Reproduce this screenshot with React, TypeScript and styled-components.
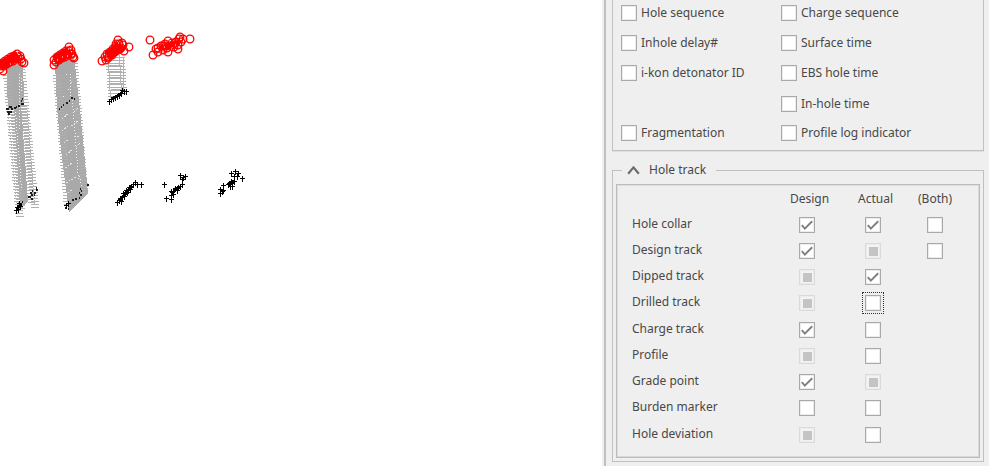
import React, { useEffect, useId, useRef, useState } from "react";
import styled, { createGlobalStyle } from "styled-components";

const GlobalStyle = createGlobalStyle`
  *, *::before, *::after { box-sizing: border-box; }
  html, body, #root { height: 100%; }
  body {
    margin: 0;
    overflow: hidden;
    background: #ffffff;
    color: #484848;
    font-family: "Noto Sans", "Open Sans", sans-serif;
    font-size: 12px;
    line-height: 16px;
  }
`;

const Window = styled.div`
  display: flex;
  min-height: 100%;
`;

const Viewport = styled.main`
  flex: 1;
  min-width: 0;
  background: #ffffff;
`;

const Plot = styled.svg`
  display: block;
  overflow: hidden;
`;

const Sidebar = styled.aside`
  flex: 0 0 387px;
  display: flex;
  background: #efefef;
  padding-left: 2px;
`;

const SidebarBody = styled.div`
  flex: 1;
  border-left: 2px solid #c0c0c0;
  padding: 0 5px 0 6px;
`;

const LabelGroup = styled.section`
  display: grid;
  grid-template-columns: 160px 1fr;
  grid-template-rows: 30px 30px 30px 32px 26px;
  align-items: center;
  margin-top: -2px;
  padding: 0 8px 4px;
  border: 1px solid #c0c0c0;
  border-top: 0;
  box-shadow: 0 1px 0 #dedede;
`;

const Option = styled.label<{ $column: number; $row: number }>`
  grid-column: ${(p) => p.$column};
  grid-row: ${(p) => p.$row};
  display: flex;
  align-items: center;
  gap: 4px;
  white-space: nowrap;
`;

const Box = styled.span`
  position: relative;
  display: inline-flex;
  flex: none;
  width: 16px;
  height: 16px;
`;

const BoxInput = styled.input<{ $focusFrame?: boolean }>`
  appearance: none;
  width: 16px;
  height: 16px;
  margin: 0;
  border: 1px solid #a9a9a9;
  background: #ffffff;
  box-shadow: inset 0 0 0 1px #ececec;
  outline: ${(p) => (p.$focusFrame ? "1px dotted #303030" : "none")};
  outline-offset: 2px;

  &:disabled {
    border-color: #dadada;
    background: #f3f3f3;
  }
`;

const BoxMark = styled.svg`
  position: absolute;
  inset: 0;
  pointer-events: none;
`;

const TrackGroup = styled.fieldset`
  min-width: 0;
  margin: 11px 0 0;
  padding: 6px 3px 3px;
  border: 1px solid #c0c0c0;
`;

const TrackLegend = styled.legend`
  margin-left: 6px;
  padding: 0 10px 0 5px;
`;

const Toggle = styled.button`
  display: flex;
  align-items: center;
  gap: 9px;
  padding: 0;
  border: 0;
  background: none;
  color: inherit;
  font: inherit;
`;

const TrackFrame = styled.div`
  border: 1px solid #bcbcbc;
  box-shadow: inset -1px -1px 0 #d8d8d8, inset 1px 1px 0 #dedede;
  padding-bottom: 9px;
`;

const TrackTable = styled.table`
  width: 100%;
  table-layout: fixed;
  border-collapse: collapse;
`;

const LabelColumn = styled.col``;

const BoxColumn = styled.col<{ $width: number }>`
  width: ${(p) => p.$width}px;
`;

const ColumnHead = styled.th<{ $indent?: boolean }>`
  height: 27px;
  padding: 0 0 0 ${(p) => (p.$indent ? 6 : 0)}px;
  font-weight: 400;
  text-align: center;
`;

const RowHead = styled.th`
  padding: 0 0 2px 15px;
  font-weight: 400;
  text-align: left;
  white-space: nowrap;
`;

const TrackRow = styled.tr<{ $tall?: boolean }>`
  height: ${(p) => (p.$tall ? 27 : 26)}px;
`;

const BoxCell = styled.td`
  padding: 0;
  text-align: center;
  line-height: 0;
`;

type BoxState = "on" | "off" | "mixed";

interface CheckProps {
  id?: string;
  label?: string;
  initial?: BoxState;
  focusFrame?: boolean;
}

function Check({ id, label, initial = "off", focusFrame }: CheckProps) {
  const [checked, setChecked] = useState(initial === "on");
  const ref = useRef<HTMLInputElement>(null);
  const mixed = initial === "mixed";

  useEffect(() => {
    if (ref.current) ref.current.indeterminate = mixed;
  }, [mixed]);

  return (
    <Box>
      <BoxInput
        ref={ref}
        id={id}
        type="checkbox"
        aria-label={label}
        checked={checked}
        disabled={mixed}
        $focusFrame={focusFrame}
        onChange={(e) => setChecked(e.target.checked)}
      />
      {(checked || mixed) && (
        <BoxMark width="16" height="16" viewBox="0 0 16 16" aria-hidden="true">
          {mixed ? (
            <rect x="4" y="4" width="9" height="9" fill="#c4c4c4" />
          ) : (
            <path d="M2.8 8.2 5.8 11.6 13.2 4.2" fill="none" stroke="#808080" strokeWidth="2" />
          )}
        </BoxMark>
      )}
    </Box>
  );
}

const options: { text: string; column: number; row: number }[] = [
  { text: "Hole sequence", column: 1, row: 1 },
  { text: "Inhole delay#", column: 1, row: 2 },
  { text: "i-kon detonator ID", column: 1, row: 3 },
  { text: "Fragmentation", column: 1, row: 5 },
  { text: "Charge sequence", column: 2, row: 1 },
  { text: "Surface time", column: 2, row: 2 },
  { text: "EBS hole time", column: 2, row: 3 },
  { text: "In-hole time", column: 2, row: 4 },
  { text: "Profile log indicator", column: 2, row: 5 },
];

const tracks: { name: string; design: BoxState; actual: BoxState; both?: BoxState; focus?: boolean; tall?: boolean }[] = [
  { name: "Hole collar", design: "on", actual: "on", both: "off" },
  { name: "Design track", design: "on", actual: "mixed", both: "off" },
  { name: "Dipped track", design: "mixed", actual: "on" },
  { name: "Drilled track", design: "mixed", actual: "off", focus: true },
  { name: "Charge track", design: "on", actual: "off", tall: true },
  { name: "Profile", design: "mixed", actual: "off" },
  { name: "Grade point", design: "on", actual: "mixed" },
  { name: "Burden marker", design: "off", actual: "off" },
  { name: "Hole deviation", design: "mixed", actual: "off", tall: true },
];

type Point = [number, number];

/* Horizontal depth ticks along a hole that leans from (x, top) at the given slope. */
const ticks = (x: number, top: number, bottom: number, slope: number, width: number) => {
  let d = "";
  for (let y = top; y <= bottom; y += 3) d += `M${Math.round(x + (y - top) * slope)} ${y + 0.5}h${width}`;
  return d;
};

const crosses = (points: Point[]) =>
  points.map(([x, y]) => `M${x - 2} ${y + 0.5}h5M${x + 0.5} ${y - 2}v6`).join("");

const collars: Point[] = [
  [1, 66], [2, 63], [4, 66], [5, 61], [7, 64], [8, 59], [10, 62], [11, 57], [13, 61], [14, 56], [16, 59],
  [17, 54], [18, 57], [20, 56], [21, 59], [3, 71], [22, 62], [24, 63], [0, 69], [6, 63], [9, 61], [12, 59], [15, 58],
  [54, 65], [54, 60], [56, 62], [57, 57], [59, 60], [60, 55], [62, 58], [63, 53], [65, 57], [66, 51], [68, 55],
  [69, 47], [69, 51], [71, 50], [72, 54], [74, 58], [73, 57], [61, 57], [64, 55], [67, 53], [58, 59], [71, 54],
  [102, 61], [106, 60], [105, 57], [107, 54], [109, 57], [110, 52], [112, 55], [113, 49], [115, 52], [116, 46],
  [118, 50], [119, 44], [121, 48], [118, 40], [123, 45], [124, 51], [129, 47], [122, 43], [108, 58], [111, 53],
  [114, 50], [117, 47], [120, 49], [116, 44],
  [150, 40], [153, 55], [158, 48], [158, 52], [161, 46], [163, 50], [165, 44], [167, 48], [168, 52], [168, 41],
  [170, 46], [172, 43], [174, 47], [176, 42], [178, 49], [178, 45], [180, 37], [181, 42], [183, 39], [190, 39],
  [166, 46], [173, 45], [156, 49], [179, 39], [163, 46],
];

const toes: Point[] = [
  [117, 202], [119, 200], [121, 201], [120, 198], [122, 197], [124, 196], [123, 193], [125, 193], [127, 192],
  [126, 190], [128, 190], [130, 189], [129, 187], [131, 186], [133, 184], [135, 182], [137, 184], [141, 184],
  [164, 184], [180, 175], [183, 177], [185, 176], [182, 179], [182, 184], [180, 186], [178, 187], [177, 190],
  [175, 188], [171, 191], [173, 191], [171, 195], [173, 194], [166, 198], [171, 199],
  [242, 178], [231, 173], [235, 171], [238, 173], [234, 176], [237, 176], [231, 181], [234, 181], [229, 183],
  [232, 183], [230, 186], [232, 186], [223, 185], [228, 184], [223, 190], [220, 189], [220, 193], [222, 191],
  [109, 101], [111, 99], [113, 98], [115, 97], [117, 96], [119, 95], [121, 93], [122, 90], [124, 91], [126, 91],
  [16, 210], [18, 209], [17, 207], [20, 206], [19, 203],
  [66, 205], [68, 203],
];

/* Short dashes that mark deck levels inside the filled hole columns. */
const decks =
  "M6 109h3M7 112h5M9 107h3M11 109h2M8 114h2M14 108h2M16 107h1M18 106h2M21 104h3M21 101h1M22 99h1" +
  "M22 202h1M28 197h3M31 195h2M30 193h2M34 193h2M32 191h1M36 190h2M31 199h2M36 188h1M34 195h1" +
  "M59 109h1M61 107h1M63 105h1M66 103h2M69 101h1M71 98h2M74 99h1" +
  "M72 200h2M75 199h2M79 198h1M80 195h2M79 193h1M81 191h1M80 189h1M87 185h2M65 208h1M68 209h1";

function BlastPlot() {
  return (
    <Plot width="260" height="230" viewBox="0 0 260 230" role="img" aria-label="Blast hole layout">
      <g shapeRendering="crispEdges">
        <path d="M6 62 23 58 24 105 8 110Z" fill="#a9a9a9" />
        <path d="M14 106 21 104 28 202 20 208Z" fill="#a9a9a9" />
        <path d="M55 62 74 56 80 110 88 193 69 213 61 150 57 108Z" fill="#a9a9a9" />
        <path
          d={
            ticks(3, 75, 217, 0.09, 8) + ticks(17, 66, 208, 0.1, 8) + ticks(10, 106, 208, 0.08, 7) +
            ticks(20, 106, 204, 0.08, 7) + ticks(53, 75, 205, 0.082, 8) + ticks(71, 63, 192, 0.08, 7) +
            ticks(106, 63, 99, 0.06, 8) + ticks(111, 57, 96, 0.03, 8) + ticks(117, 57, 93, 0.05, 8) +
            "M109 65.5h13M109 71.5h13M109 77.5h13M110 83.5h13M111 89.5h12"
          }
          stroke="#b0b0b0"
          fill="none"
        />
        <path
          d="M108.5 64 110.5 98M119.5 55 121.5 94M123.5 58V92M27.5 110 34.5 204M8.5 114 16.5 204"
          stroke="#b5b5b5"
          strokeDasharray="2 1"
          fill="none"
        />
        <path
          d="M19.5 74v56M21.5 78v14M15.5 112l6 76M22.5 116l6 80M6.5 80v26M66.5 74v1M71.5 82v1M68.5 89v1M63.5 96v1M70.5 74v22M72.5 100l6 80M79.5 176l2 12"
          stroke="#f2f2f2"
          strokeDasharray="1 2"
          fill="none"
        />
        <path
          d="M62 131l6-5M71 126l7-5M64 143l4-3M74 136h5M66 155l7-6M76 147l4-4M65 168l7-5M66 183l10-6M68 193l5-4M62 119l7-6M74 112l4-4"
          stroke="#e6e6e6"
          strokeDasharray="2 1"
          fill="none"
        />
        <path d={decks} stroke="#1c1c1c" strokeWidth="2" fill="none" />
        <path d={crosses(toes)} stroke="#000000" fill="none" />
        <path
          d="M119 201 125 194 132 186M171 194 179 187M229 185 234 181M112 99 122 93M17 209 21 204"
          stroke="#000000"
          strokeWidth="3"
          fill="none"
        />
      </g>
      <g fill="none" stroke="#ff0000" strokeWidth="1.3">
        <path
          d="M0 66 7 62 18 55M55 60 61 56 70 51M107 56 113 52 121 46"
          strokeWidth="10"
          strokeLinejoin="round"
        />
        <path d="M160 48 168 46 179 42" strokeWidth="5" />
        {collars.map(([x, y], i) => (
          <circle key={i} cx={x} cy={y} r="3.8" />
        ))}
      </g>
      <path d="M17 53h1M10 64h1M68 49h1M62 57h1M67 56h1M57 60h1M118 43h1M164 47h1M175 45h1M171 49h1" stroke="#ffffff" />
    </Plot>
  );
}

function OptionItem({ text, column, row }: { text: string; column: number; row: number }) {
  const id = useId();
  return (
    <Option htmlFor={id} $column={column} $row={row}>
      <Check id={id} />
      {text}
    </Option>
  );
}

export default function App() {
  const [open, setOpen] = useState(true);

  return (
    <>
      <GlobalStyle />
      <Window>
        <Viewport>
          <BlastPlot />
        </Viewport>
        <Sidebar>
          <SidebarBody>
            <LabelGroup aria-label="Labels">
              {options.map((o) => (
                <OptionItem key={o.text} {...o} />
              ))}
            </LabelGroup>
            <TrackGroup>
              <TrackLegend>
                <Toggle type="button" aria-expanded={open} onClick={() => setOpen(!open)}>
                  <svg width="13" height="10" viewBox="0 0 13 10" aria-hidden="true">
                    <path d="M1.2 8.8 6.5 2.4 11.8 8.8" fill="none" stroke="#6b6b6b" strokeWidth="2.2" />
                  </svg>
                  Hole track
                </Toggle>
              </TrackLegend>
              {open && (
                <TrackFrame>
                  <TrackTable>
                    <colgroup>
                      <LabelColumn />
                      <BoxColumn $width={65} />
                      <BoxColumn $width={67} />
                      <BoxColumn $width={58} />
                      <BoxColumn $width={15} />
                    </colgroup>
                    <thead>
                      <tr>
                        <td />
                        <ColumnHead scope="col" $indent>Design</ColumnHead>
                        <ColumnHead scope="col" $indent>Actual</ColumnHead>
                        <ColumnHead scope="col">(Both)</ColumnHead>
                        <td />
                      </tr>
                    </thead>
                    <tbody>
                      {tracks.map((t) => (
                        <TrackRow key={t.name} $tall={t.tall}>
                          <RowHead scope="row">{t.name}</RowHead>
                          <BoxCell>
                            <Check label={`${t.name} design`} initial={t.design} />
                          </BoxCell>
                          <BoxCell>
                            <Check label={`${t.name} actual`} initial={t.actual} focusFrame={t.focus} />
                          </BoxCell>
                          <BoxCell>{t.both && <Check label={`${t.name} both`} initial={t.both} />}</BoxCell>
                          <td />
                        </TrackRow>
                      ))}
                    </tbody>
                  </TrackTable>
                </TrackFrame>
              )}
            </TrackGroup>
          </SidebarBody>
        </Sidebar>
      </Window>
    </>
  );
}
